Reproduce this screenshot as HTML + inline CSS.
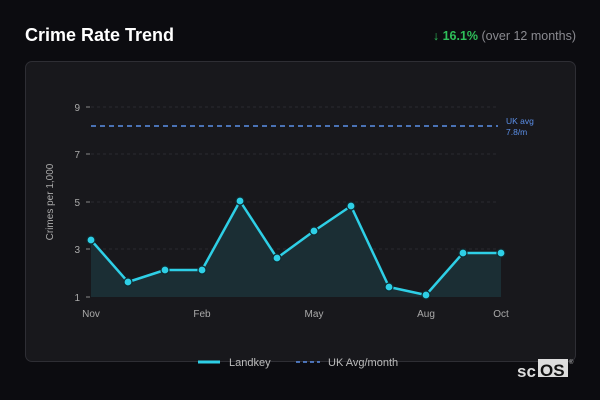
<!DOCTYPE html><html><head><style>
body{margin:0;width:600px;height:400px;background:#0c0c10;font-family:"Liberation Sans",sans-serif;position:relative;overflow:hidden}
.t{position:absolute;left:25px;top:25px;color:#fff;font-weight:bold;font-size:18px}
.c{position:absolute;right:24px;top:29px;font-size:12.5px;color:#8a8a90}
.c b{color:#2fbf5a}
.card{position:absolute;left:25px;top:61px;width:549px;height:299px;background:#18181c;border:1px solid #2e2e34;border-radius:7px}
</style></head><body>
<div class="t">Crime Rate Trend</div>
<div class="c"><b>↓ 16.1%</b> (over 12 months)</div>
<div class="card"></div>
<svg style="position:absolute;left:0;top:0" width="600" height="400" font-family="Liberation Sans, sans-serif">
<g stroke="#2a2a30" stroke-dasharray="3 3" stroke-width="1">
<line x1="91" y1="107" x2="498" y2="107"/><line x1="91" y1="154" x2="498" y2="154"/><line x1="91" y1="202" x2="498" y2="202"/><line x1="91" y1="249" x2="498" y2="249"/>
</g>
<g stroke="#888"><line x1="86" y1="107" x2="90" y2="107"/><line x1="86" y1="154" x2="90" y2="154"/><line x1="86" y1="202" x2="90" y2="202"/><line x1="86" y1="249" x2="90" y2="249"/><line x1="86" y1="297" x2="90" y2="297"/></g>
<g fill="#aaa" font-size="10" text-anchor="end"><text x="80" y="111">9</text><text x="80" y="158">7</text><text x="80" y="206">5</text><text x="80" y="253">3</text><text x="80" y="301">1</text></g>
<text transform="translate(53,202) rotate(-90)" fill="#aaa" font-size="10" text-anchor="middle">Crimes per 1,000</text>
<g fill="#aaa" font-size="10" text-anchor="middle"><text x="91" y="317">Nov</text><text x="202" y="317">Feb</text><text x="314" y="317">May</text><text x="426" y="317">Aug</text><text x="501" y="317">Oct</text></g>
<line x1="91" y1="126" x2="498" y2="126" stroke="#5b8fe8" stroke-width="1.5" stroke-dasharray="5 4"/>
<text x="506" y="124" fill="#5b8fe8" font-size="8.5">UK avg</text><text x="506" y="135" fill="#5b8fe8" font-size="8.5">7.8/m</text>
<polygon points="91,297 91,240 128,282 165,270 202,270 240,201 277,258 314,231 351,206 389,287 426,295 463,253 501,253 501,297" fill="#1b2e34"/>
<polyline points="91,240 128,282 165,270 202,270 240,201 277,258 314,231 351,206 389,287 426,295 463,253 501,253" fill="none" stroke="#2ecfe6" stroke-width="2.5" stroke-linejoin="round"/>
<g fill="#2ecfe6" stroke="#0f2a30" stroke-width="1.2">
<circle cx="91" cy="240" r="4"/><circle cx="128" cy="282" r="4"/><circle cx="165" cy="270" r="4"/><circle cx="202" cy="270" r="4"/><circle cx="240" cy="201" r="4"/><circle cx="277" cy="258" r="4"/><circle cx="314" cy="231" r="4"/><circle cx="351" cy="206" r="4"/><circle cx="389" cy="287" r="4"/><circle cx="426" cy="295" r="4"/><circle cx="463" cy="253" r="4"/><circle cx="501" cy="253" r="4"/>
</g>
<line x1="198" y1="362" x2="220" y2="362" stroke="#2ecfe6" stroke-width="3"/>
<text x="229" y="366" fill="#bbb" font-size="11">Landkey</text>
<line x1="296" y1="362" x2="320" y2="362" stroke="#5b8fe8" stroke-width="1.5" stroke-dasharray="4 3"/>
<text x="328" y="366" fill="#bbb" font-size="11">UK Avg/month</text>
<text x="517" y="377" fill="#ddd" font-size="17" font-weight="bold">sc</text>
<rect x="538" y="359" width="30" height="18" fill="#ddd"/>
<text x="540" y="376" fill="#111" font-size="17" font-weight="bold">OS</text>
<text x="569" y="364" fill="#bbb" font-size="6">®</text>
</svg>
</body></html>
